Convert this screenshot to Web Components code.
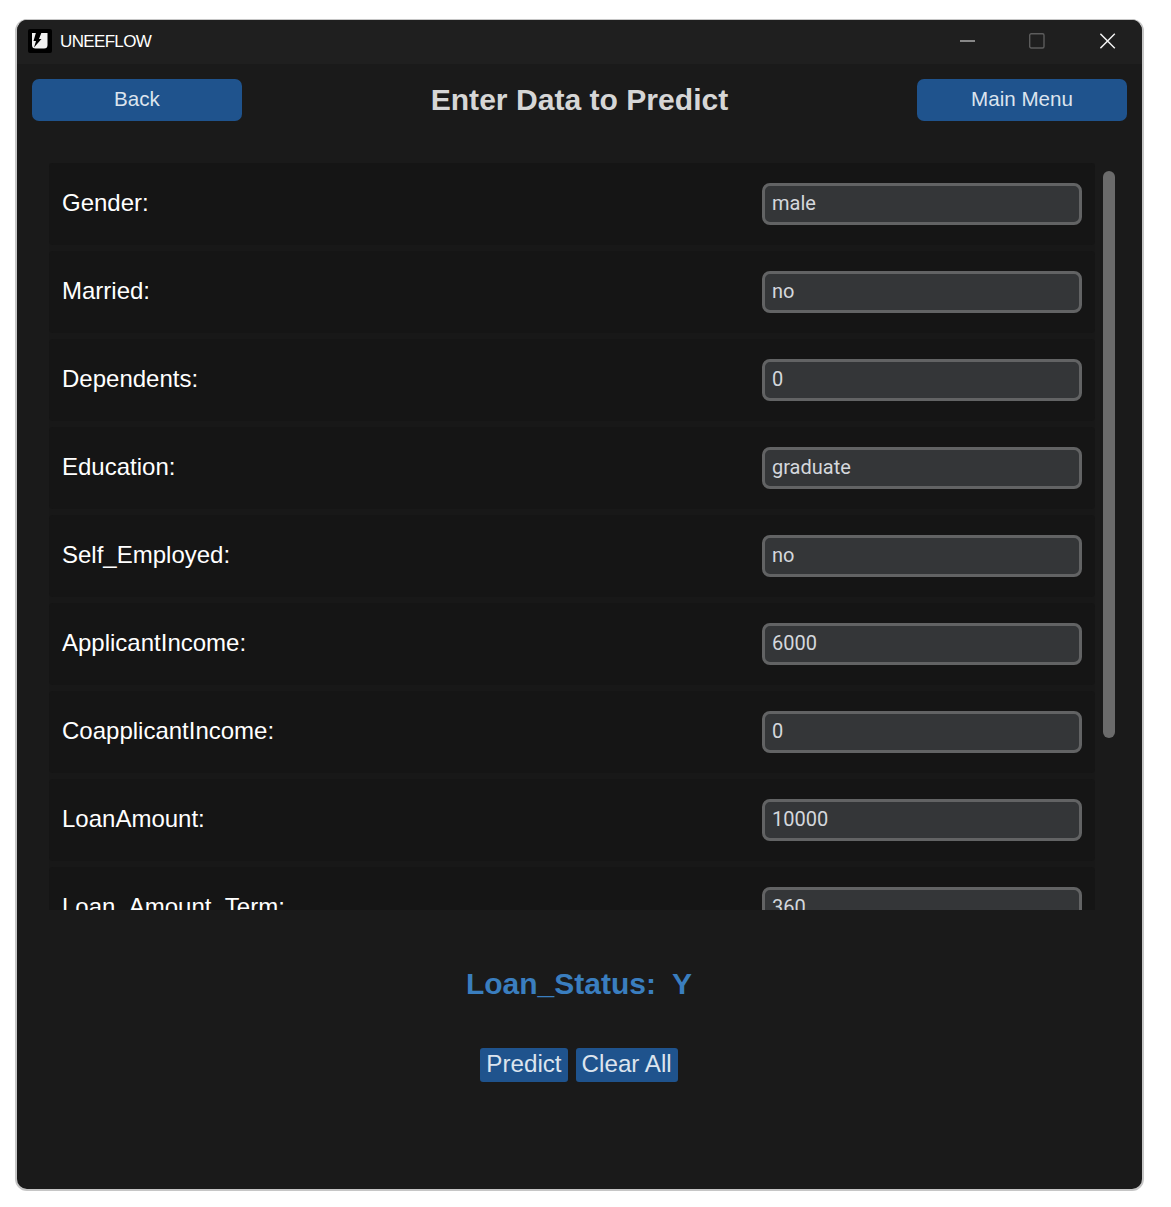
<!DOCTYPE html>
<html>
<head>
<meta charset="utf-8">
<title>UNEEFLOW</title>
<style>
  html, body { margin: 0; background: #fff; }
  body { padding: 19px 25px 16px 15px; font-family: "Liberation Sans", Arial, sans-serif; }
</style>
</head>
<body>
<app-window>
  <title-bar slot="titlebar">UNEEFLOW</title-bar>
  <page-header title="Enter Data to Predict">
    <action-button slot="left">Back</action-button>
    <action-button slot="right">Main Menu</action-button>
  </page-header>
  <scroll-list>
    <data-row label="Gender:" value="male"></data-row>
    <data-row label="Married:" value="no"></data-row>
    <data-row label="Dependents:" value="0"></data-row>
    <data-row label="Education:" value="graduate"></data-row>
    <data-row label="Self_Employed:" value="no"></data-row>
    <data-row label="ApplicantIncome:" value="6000"></data-row>
    <data-row label="CoapplicantIncome:" value="0"></data-row>
    <data-row label="LoanAmount:" value="10000"></data-row>
    <data-row label="Loan_Amount_Term:" value="360"></data-row>
  </scroll-list>
  <result-panel status="Loan_Status:&nbsp; Y">
    <small-button>Predict</small-button>
    <small-button>Clear All</small-button>
  </result-panel>
</app-window>

<script>
class AppWindow extends HTMLElement {
  constructor() {
    super();
    this.attachShadow({ mode: 'open' });
    this.shadowRoot.innerHTML = `
      <style>
        :host {
          display: block;
          width: 1125px;
          height: 1169px;
          box-sizing: content-box;
          border: 2px solid #c6c6c6;
          border-top-width: 1px;
          border-radius: 12px;
          background: #1a1a1a;
          overflow: hidden;
        }
        .body { display: flex; flex-direction: column; }
      </style>
      <slot name="titlebar"></slot>
      <div class="body"><slot></slot></div>
    `;
  }
}
customElements.define('app-window', AppWindow);

class TitleBar extends HTMLElement {
  constructor() {
    super();
    this.attachShadow({ mode: 'open' });
    this.shadowRoot.innerHTML = `
      <style>
        :host {
          display: flex;
          align-items: center;
          box-sizing: border-box;
          height: 44px;
          padding-bottom: 2px;
          background: #1f1f1f;
          color: #fff;
          font: 17px "Liberation Sans", Arial, sans-serif;
          letter-spacing: -0.65px;
        }
        .logo { margin: 0 8px 0 11px; flex: none; display: block; }
        .name { flex: 1; margin-top: 2px; }
        .ctl { width: 16px; height: 16px; display: block; flex: none; }
        .controls { display: flex; align-items: center; margin-right: 26px; }
        .mid { margin: 0 55px 0 53px; }
      </style>
      <svg class="logo" width="24" height="24" viewBox="0 0 24 24">
        <rect width="24" height="24" rx="2" fill="#000"/>
        <path d="M4 4H19.5V16Q19.5 19.5 16 19.5H7.5Q4 19.5 4 16Z" fill="#f2f2f2"/>
        <path d="M8 3.5H13.5L11 10H13.5L6 18.5L8 12H5.5Z" fill="#000"/>
      </svg>
      <span class="name"><slot></slot></span>
      <div class="controls">
        <svg class="ctl" viewBox="0 0 16 16"><path d="M0 8H15" stroke="#f0f0f0" stroke-width="1.2"/></svg>
        <svg class="ctl mid" viewBox="0 0 16 16"><rect x="0.7" y="0.7" width="14.3" height="14.3" rx="1.5" fill="none" stroke="#5c5c5c" stroke-width="1.4"/></svg>
        <svg class="ctl" viewBox="0 0 16 16"><path d="M0.4 0.8L14.8 15.2M14.8 0.8L0.4 15.2" stroke="#f4f4f4" stroke-width="1.4"/></svg>
      </div>
    `;
  }
}
customElements.define('title-bar', TitleBar);

class ActionButton extends HTMLElement {
  constructor() {
    super();
    this.attachShadow({ mode: 'open' });
    this.shadowRoot.innerHTML = `
      <style>
        :host {
          display: flex;
          align-items: center;
          justify-content: center;
          width: 210px;
          height: 42px;
          padding-bottom: 2px;
          box-sizing: border-box;
          border-radius: 7px;
          background: #1f538d;
          color: #dce4ee;
          font: 20.6px "Liberation Sans", Arial, sans-serif;
        }
      </style>
      <slot></slot>
    `;
  }
}
customElements.define('action-button', ActionButton);

class PageHeader extends HTMLElement {
  constructor() {
    super();
    this.attachShadow({ mode: 'open' });
    this.shadowRoot.innerHTML = `
      <style>
        :host {
          display: flex;
          align-items: center;
          justify-content: space-between;
          padding: 15px 15px 0 15px;
          height: 42px;
        }
        h1 {
          margin: 0;
          color: #d6d6d6;
          font: bold 30.1px "Liberation Sans", Arial, sans-serif;
        }
      </style>
      <slot name="left"></slot>
      <h1>${this.getAttribute('title')}</h1>
      <slot name="right"></slot>
    `;
  }
}
customElements.define('page-header', PageHeader);

class ScrollList extends HTMLElement {
  constructor() {
    super();
    this.attachShadow({ mode: 'open' });
    this.shadowRoot.innerHTML = `
      <style>
        :host {
          display: flex;
          margin: 42px 0 0 32px;
          height: 747px;
        }
        .rows {
          width: 1046px;
          overflow: hidden;
          display: flex;
          flex-direction: column;
          gap: 6px;
          background: #181818;
        }
        .track { margin-left: 8px; padding-top: 8px; }
        .thumb { width: 12px; height: 567px; border-radius: 6px; background: #6b6b6b; }
      </style>
      <div class="rows"><slot></slot></div>
      <div class="track"><div class="thumb"></div></div>
    `;
  }
}
customElements.define('scroll-list', ScrollList);

class DataRow extends HTMLElement {
  constructor() {
    super();
    this.attachShadow({ mode: 'open' });
    this.shadowRoot.innerHTML = `
      <style>
        :host {
          display: flex;
          flex: none;
          align-items: flex-start;
          justify-content: space-between;
          box-sizing: border-box;
          height: 82px;
          padding: 20px 13px 0 13px;
          background: #151515;
          border-radius: 4px;
        }
        .label {
          color: #fff;
          font: 24px/40px "Liberation Sans", Arial, sans-serif;
        }
        .field {
          box-sizing: border-box;
          width: 320px;
          height: 42px;
          padding: 0 7px;
          border: 3px solid #626364;
          border-radius: 8px;
          background: #343638;
          color: #d4d8dd;
          font: 20px/34px Roboto, "Liberation Sans", sans-serif;
        }
      </style>
      <span class="label">${this.getAttribute('label')}</span>
      <div class="field">${this.getAttribute('value')}</div>
    `;
  }
}
customElements.define('data-row', DataRow);

class SmallButton extends HTMLElement {
  constructor() {
    super();
    this.attachShadow({ mode: 'open' });
    this.shadowRoot.innerHTML = `
      <style>
        :host {
          display: block;
          padding: 0 6px;
          height: 34px;
          border-radius: 3px;
          background: #1f538d;
          color: #dce4ee;
          font: 24.2px/32px "Liberation Sans", Arial, sans-serif;
        }
      </style>
      <slot></slot>
    `;
  }
}
customElements.define('small-button', SmallButton);

class ResultPanel extends HTMLElement {
  constructor() {
    super();
    this.attachShadow({ mode: 'open' });
    this.shadowRoot.innerHTML = `
      <style>
        :host {
          display: flex;
          flex-direction: column;
          align-items: center;
          margin-right: 1px;
          padding-top: 55px;
        }
        .status {
          color: #3a7ebf;
          font: bold 30px/38px "Liberation Sans", Arial, sans-serif;
        }
        .buttons { display: flex; gap: 8px; margin-top: 45px; }
      </style>
      <div class="status">${this.getAttribute('status')}</div>
      <div class="buttons"><slot></slot></div>
    `;
  }
}
customElements.define('result-panel', ResultPanel);
</script>
</body>
</html>
